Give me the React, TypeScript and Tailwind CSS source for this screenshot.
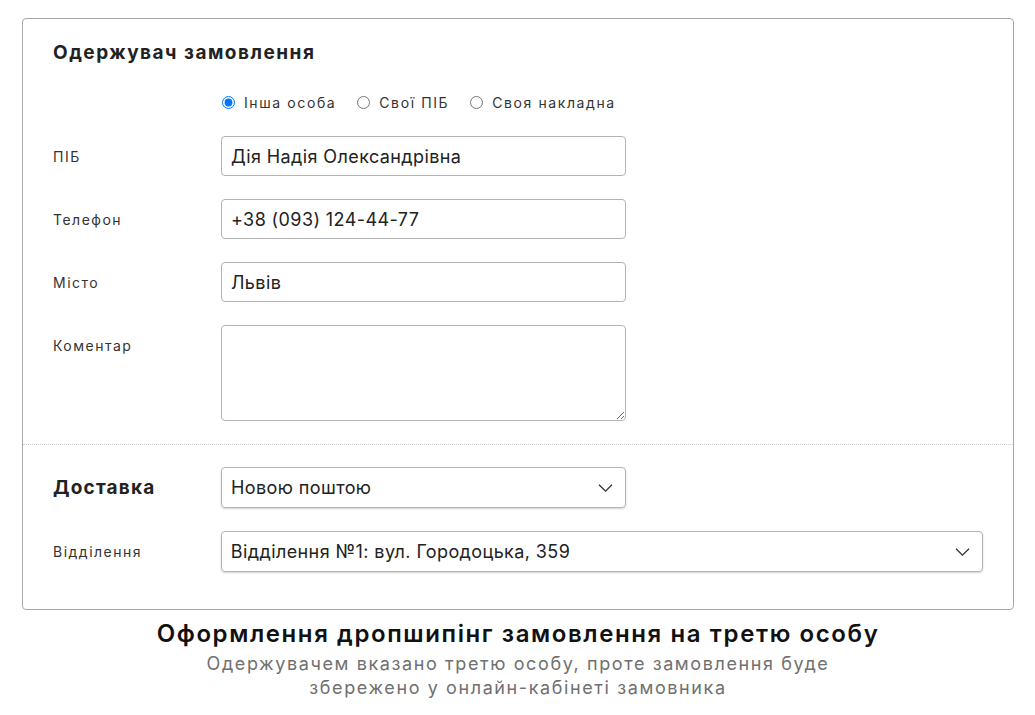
import React from 'react'

const labelFont = { fontFamily: 'Inter, "Noto Sans", sans-serif' }

const Chevron = () => (
  <svg width="15" height="9" viewBox="0 0 15 9" className="absolute right-[12px] top-1/2 -translate-y-1/2">
    <path d="M1 1.2 L7.5 7.7 L14 1.2" fill="none" stroke="#333" strokeWidth="1.3" />
  </svg>
)

const Field = ({ label, value }: { label: string; value: string }) => (
  <div className="flex items-start">
    <div className="w-[168px] h-10 flex items-center text-[14px] tracking-[1.5px] text-[#333]">{label}</div>
    <input
      readOnly
      value={value}
      className="w-[405px] h-10 border border-[#b3b3b3] rounded-[4px] px-[9px] text-[18px] tracking-[0.4px] text-[#222] outline-none"
      style={labelFont}
    />
  </div>
)

const Radio = ({ label, checked }: { label: string; checked?: boolean }) => (
  <label className="flex items-center gap-[9px] text-[14px] tracking-[1.6px] text-[#333]">
    <input type="radio" name="who" checked={!!checked} readOnly className="w-[13px] h-[13px] m-0 accent-[#0075ff]" />
    {label}
  </label>
)

const App = () => {
  return (
    <div className="bg-white w-[1035px] h-[715px] pt-[18px] px-[22px]" style={labelFont}>
      <div className="border border-[#a8a8a8] rounded-[4px] w-[992px]">
        <div className="px-[30px] pt-[22px] pb-[23px]">
          <h2 className="text-[19px] leading-6 font-bold tracking-[1.5px] text-[#222]">Одержувач замовлення</h2>
          <div className="flex gap-[21px] ml-[168px] mt-[27px] h-[20px] pl-[1px]">
            <Radio label="Інша особа" checked />
            <Radio label="Свої ПІБ" />
            <Radio label="Своя накладна" />
          </div>
          <div className="flex flex-col gap-[23px] mt-[24px]">
            <Field label="ПІБ" value="Дія Надія Олександрівна" />
            <Field label="Телефон" value="+38 (093) 124-44-77" />
            <Field label="Місто" value="Львів" />
            <div className="flex items-start">
              <div className="w-[168px] h-10 flex items-center text-[14px] tracking-[1.5px] text-[#333]">Коментар</div>
              <textarea
                readOnly
                className="w-[405px] h-[96px] border border-[#b3b3b3] rounded-[4px] px-[9px] outline-none block"
              />
            </div>
          </div>
        </div>
        <div className="border-t border-dotted border-[#cfcfcf]" />
        <div className="px-[30px] pt-[22px] pb-[37px] flex flex-col gap-[23px]">
          <div className="flex items-center">
            <div className="w-[168px] text-[19px] font-bold tracking-[1.2px] text-[#222] pt-[2px]">Доставка</div>
            <div className="relative w-[405px] h-[41px] border border-[#b3b3b3] rounded-[4px] shadow-[0_1px_2px_rgba(0,0,0,0.18)] flex items-center px-[9px] text-[18px] tracking-[0.4px] text-[#222]">
              Новою поштою
              <Chevron />
            </div>
          </div>
          <div className="flex items-center">
            <div className="w-[168px] text-[14px] tracking-[1.5px] text-[#333]">Відділення</div>
            <div className="relative w-[763px] h-[41px] border border-[#b3b3b3] rounded-[4px] shadow-[0_1px_2px_rgba(0,0,0,0.18)] flex items-center px-[9px] text-[18px] tracking-[0.4px] text-[#222]">
              Відділення №1: вул. Городоцька, 359
              <Chevron />
            </div>
          </div>
        </div>
      </div>
      <div className="w-[992px] text-center mt-[8px]">
        <div className="text-[24px] leading-[32px] font-semibold tracking-[1.6px] text-[#111]">
          Оформлення дропшипінг замовлення на третю особу
        </div>
        <div className="text-[18px] leading-6 tracking-[1.6px] text-[#707070] mt-[2px]">
          Одержувачем вказано третю особу, проте замовлення буде
          <br />
          збережено у онлайн-кабінеті замовника
        </div>
      </div>
    </div>
  )
}

export default App
